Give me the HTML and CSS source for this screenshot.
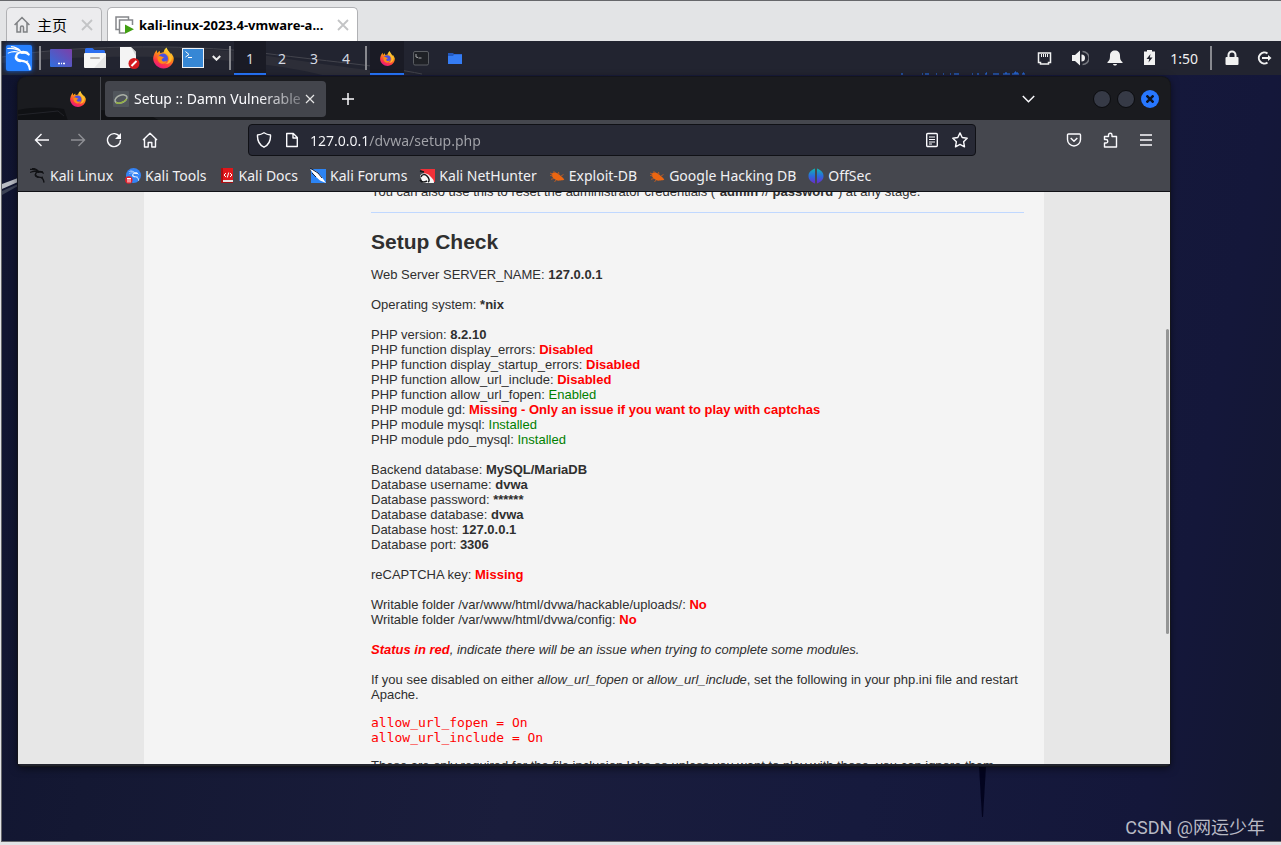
FILE: index.html
```html
<!DOCTYPE html>
<html lang="en">
<head>
  <meta charset="UTF-8" />
  <title>Setup :: Damn Vulnerable Web Application</title>
  <link rel="stylesheet" href="styles.css">
</head>
<body>
  <svg class="defs" aria-hidden="true">
    <defs>
      <linearGradient id="fire" x1="0.8" y1="0" x2="0.3" y2="1">
        <stop offset="0" stop-color="#fff44f" />
        <stop offset="0.4" stop-color="#ff980e" />
        <stop offset="0.75" stop-color="#ff3647" />
        <stop offset="1" stop-color="#e31587" />
      </linearGradient>
      <linearGradient id="purple" x1="0" y1="1" x2="1" y2="0">
        <stop offset="0" stop-color="#2f6fdd" />
        <stop offset="1" stop-color="#7d3fa8" />
      </linearGradient>
      <linearGradient id="offsec" x1="0" y1="0" x2="0" y2="1">
        <stop offset="0" stop-color="#12b5b0" />
        <stop offset="0.5" stop-color="#2a6cdd" />
        <stop offset="1" stop-color="#6a2bc9" />
      </linearGradient>
    </defs>
    <symbol id="firefox" viewBox="0 0 24 24">
      <path fill="url(#fire)" d="M22.6 9.5c-.6-1.8-1.700-3-2.700-3.600.5.9.8 1.800.9 2.500C19.600 5.500 17.300 4.200 15.900 1c-.1-.3-.2-.6-.1-1-2.500 1.400-3.500 4-3.600 5.400-1.300.1-2.500.5-3.500 1.100-.8-.6-1-1.600-.7-2.800-1.300.6-2.300 1.600-3 2.500-.6-.7-.5-2.900-.5-3.400C2.700 4.300 1.300 7.200 1 8.500.3 10.300.1 12 .2 13.200.8 19.300 5.900 24 12 24c6.600 0 11.700-5.200 11.700-11.500 0-1-.4-2.200-1.100-3z" />
      <circle cx="11.500" cy="12.500" r="5.600" fill="#4b51e0" />
      <path fill="#ff8a16" d="M5.200 10.500c1.500-1 3.300-.9 4.600-.1.700.5 1.800.6 2.700.8-.2 1-1.600 1.300-2.300 1.900-.5.500-.2 1.600.5 2.300 1.400 1.300 3.700.7 5.100-.5-.5 2.500-2.400 3.700-4.500 3.700-3.800 0-6.500-3.100-6.100-8.100z" />
      <path fill="#ffbd30" d="M13.300 5.600c2.600.8 5.200 3.500 5.100 7.200 0 3-2 5.400-4.600 6.100 5.300.2 8-3.700 7.700-7.700-.3-3.300-4.300-4.600-5.500-8.200-1 .6-2.200 1.300-2.700 2.600z" />
    </symbol>
    <symbol id="dragon" viewBox="0 0 24 24">
      <path fill="none" stroke="currentColor" stroke-linecap="round" d="M1.500 3.200C6 2.800 11 4 14.500 6.500M2 7.500c4-2 8.500-1.500 12 0M5 1.500c3 .5 6 1.500 8 3.500" />
      <path fill="none" stroke="currentColor" stroke-width="2" stroke-linecap="round" stroke-linejoin="round" d="M21 8.800c-1.500-1.800-4-2.800-6.500-2.300-3.500.3-5.500 2.500-5 5 .6 3 4.500 2.800 7.500 3.600 3 .9 4.500 3.500 5 7.200" />
      <path fill="currentColor" d="M14 5.500l4.500.7 3 3.300-4-1.500-3.500.3zM9 9c-.5 4 2 5.500 6 6l-1.500 1C9 15.500 6.500 12 9 9z" />
      <path fill="none" stroke="currentColor" d="M16 6.500l4.500.3M17.500 15.500l3-.8" />
    </symbol>
    <symbol id="bug" viewBox="0 0 16 16">
      <path fill="#ec6611" d="M3.500 5C5 4.200 8 4.500 10 6.500c1.500 1.600 4 2.600 5.300 5.200-1.800.8-3.500.5-5 .9C7.500 13.200 4.500 10.500 3 8.500 2.300 7.300 2.500 5.700 3.500 5z" />
      <path fill="none" stroke="#b45a26" d="M1 7.500l3 .5M5 10.500l-3 .8M7 12l-1.500 2M6.500 5L4.500 3M10 6.500L9.500 4M12 8l2.500-1.500M1 5l2.500 1" />
    </symbol>
  </svg>

  <nav class="vm-tabs">
    <div class="vm-tab">
      <svg width="16" height="17" viewBox="0 0 16 17" fill="none" stroke="#7f8184" stroke-width="1.500"><path d="M.6 9L8 1.500 15.400 9M3 7v9h3.500v-4.500a1.500 1.500 0 0 1 3 0V16H13V7" /></svg>
      <span>主页</span>
      <button type="button" aria-label="Close home tab"><svg width="12" height="12" viewBox="0 0 12 12" stroke="#c3c4c6" stroke-width="1.800"><path d="M1 1l10 10M11 1L1 11" /></svg></button>
    </div>
    <div class="vm-tab current">
      <svg width="20" height="18" viewBox="0 0 20 18"><path d="M4 13.500H1V1h12.500v3" fill="none" stroke="#85878a" stroke-width="1.500" /><path d="M17.500 9V4H4.500v13H10" fill="none" stroke="#85878a" stroke-width="1.500" /><path d="M10 8.500l9 4.700-9 4.600z" fill="#42a012" /></svg>
      <span>kali-linux-2023.4-vmware-a...</span>
      <button type="button" aria-label="Close virtual machine tab"><svg width="12" height="12" viewBox="0 0 12 12" stroke="#c3c4c6" stroke-width="1.800"><path d="M1 1l10 10M11 1L1 11" /></svg></button>
    </div>
  </nav>

  <main class="desktop">
    <!-- wallpaper details that show around the window -->
    <svg class="wallpaper" aria-hidden="true">
      <path d="M0 143l16-6v4L0 148z" fill="#b9bcc4" />
      <path d="M0 150l16-7v2L0 154z" fill="#3d4356" />
      <path d="M977 725h7l-3 51h-1z" fill="#03041f" />
    </svg>

    <header class="panel">
      <svg class="panel-art" aria-hidden="true">
        <path d="M0 16C60 5 180 2 260 14s110 16 150 20h-90C250 16 120 10 0 22z" fill="#2d2e38" />
        <path d="M0 16C60 5 180 2 260 12s120 13 160 21" fill="none" stroke="#43444d" />
        <path d="M899 33h2M920 33h1M923 33h4M934 33h1M941 33h1M948 33h1M952 33h5M970 33h1M975 33h2M983 33h2M991 33h6M1001 33h7M1010 33h7M1020 33h3" stroke="#2777ff" />
        <path d="M984 32h1M1003 32h2M1012 32h4M1013 31h1M1021 32h1" stroke="#2777ff" />
      </svg>
      <button type="button" class="cell" aria-label="Applications"><span class="kali"><svg width="26" height="26"><use href="#dragon" /></svg></span></button>
      <i class="sep"></i>
      <button type="button" class="cell" aria-label="Show desktop"><svg width="22" height="18"><rect width="22" height="18" rx="1" fill="url(#purple)" /><path d="M8 14.500h2M11 14.500h1M13 14.500h2" stroke="#fff" stroke-width="1.500" /></svg></button>
      <button type="button" class="cell" aria-label="Files"><svg width="22" height="20"><path d="M1 1.500Q1 0 2.500 0h6l2 2h9Q21 2 21 3.500V8H1z" fill="#2d6ff0" /><rect y="5" width="22" height="15" rx="1" fill="#f6f6f6" /><path d="M22 7v13H10z" fill="#e6e6e6" /><path d="M7 10h8" stroke="#b5b0ae" stroke-width="2" stroke-linecap="round" /></svg></button>
      <button type="button" class="cell" aria-label="Text editor"><svg width="21" height="22"><path d="M1 0h11l5 5v16H1z" fill="#f4f4f4" /><path d="M12 0l5 5v4z" fill="#cfcfcf" /><circle cx="15" cy="16.500" r="5.500" fill="#d51a1f" /><path d="M12.500 19l5-5" stroke="#fff" stroke-width="2" /></svg></button>
      <button type="button" class="cell" aria-label="Firefox"><svg width="21" height="22"><use href="#firefox" /></svg></button>
      <button type="button" class="cell narrow" aria-label="Terminal"><svg width="22" height="20"><rect x=".5" y=".5" width="21" height="19" fill="#3687d5" stroke="#f0f2f5" /><path d="M3.500 3.500l3.500 3-3.500 2.500M6 9.500h4" fill="none" stroke="#fff" /></svg></button>
      <button type="button" class="cell drop" aria-label="More terminals"><svg width="9" height="6" fill="none" stroke="#eee" stroke-width="2"><path d="M.8 1l3.700 3.700L8.200 1" /></svg></button>
      <i class="sep"></i>
      <button type="button" class="space active">1</button>
      <button type="button" class="space">2</button>
      <button type="button" class="space">3</button>
      <button type="button" class="space">4</button>
      <i class="sep"></i>
      <button type="button" class="cell active" aria-label="Firefox window"><svg width="15" height="15"><use href="#firefox" /></svg></button>
      <button type="button" class="cell" aria-label="Terminal window"><svg width="16" height="15"><rect x=".5" y=".5" width="15" height="13.500" rx="1.500" fill="#1f2126" stroke="#5a5d62" /><path d="M3 3v3l2 .5M5.500 7h3" fill="none" stroke="#a8aaac" /></svg></button>
      <button type="button" class="cell" aria-label="File manager window"><svg width="14" height="11"><path d="M0 0h5l1 1h8v10H0z" fill="#2459bd" /><path d="M0 3h5l1-1.500h8V11H0z" fill="#357cf3" /></svg></button>

      <div class="tray">
        <button type="button" class="cell wide" aria-label="Network"><svg width="15" height="13"><path d="M1.500 1h12v9.500h-2V12h-8v-1.500h-2z" fill="none" stroke="#f1f1f1" stroke-width="1.500" /><path d="M4.500 2v3M6.500 2v3M8.500 2v3M10.500 2v3" stroke="#f1f1f1" /></svg></button>
        <button type="button" class="cell wide" aria-label="Volume"><svg width="18" height="16"><path d="M1 5h3l5-4.500v15L4 11H1z" fill="#f1f1f1" /><path d="M10.500 4.500a3.500 3.500 0 0 1 0 7z" fill="#f1f1f1" /><path d="M11.500 1.500a6.500 6.500 0 0 1 0 13" fill="none" stroke="#75777e" stroke-width="1.500" /></svg></button>
        <button type="button" class="cell wide" aria-label="Notifications"><svg width="16" height="16" fill="#f1f1f1"><path d="M8 .5c3 0 5 2 5 5 0 4 .7 5 2.500 6.500v1H.5v-1C2.300 10.500 3 9.500 3 5.500c0-3 2-5 5-5z" /><path d="M6 14h4c-.5 2-3.500 2-4 0z" /></svg></button>
        <button type="button" class="cell wide" aria-label="Battery"><svg width="11" height="16"><path d="M3 0h5v1.500h3V15H0V1.500h3z" fill="#f1f1f1" /><path d="M6.500 4L2.500 9h2.700l-.7 3.500 4-5H5.800z" fill="#22242f" /></svg></button>
        <time>1:50</time>
        <i class="sep"></i>
        <button type="button" class="cell" aria-label="Lock"><svg width="14" height="16"><path d="M3.500 8V5a3.500 3.500 0 0 1 7 0v3" fill="none" stroke="#f1f1f1" stroke-width="2" /><rect x=".5" y="7" width="13" height="8" rx="1" fill="#f1f1f1" /></svg></button>
        <button type="button" class="cell" aria-label="Log out"><svg width="15" height="14" fill="none" stroke="#f1f1f1" stroke-width="2"><path d="M10.500 2.500A5.500 5.500 0 1 0 10.500 11.500M5 7h8" /><path d="M11 4l3.500 3L11 10z" fill="#f1f1f1" stroke="none" /></svg></button>
      </div>
    </header>

    <section class="window">
      <header class="titlebar">
        <svg class="titlebar-art" aria-hidden="true"><path d="M0 33c16-3 30-3 46-1l4 12H0zM82 33l46 3 14 8H82z" fill="#101114" /><path d="M0 38l40-4 6 5" fill="none" stroke="#232429" /></svg>
        <div class="pinned"><svg width="16" height="16"><use href="#firefox" /></svg></div>
        <div class="tab">
          <svg width="16" height="16"><rect width="16" height="16" rx="1" fill="#51565c" /><ellipse cx="8" cy="8" rx="6.300" ry="3.700" transform="rotate(-22 8 8)" fill="none" stroke="#aab0a6" stroke-width="1.500" /><path d="M3 11.500c3 1.800 9-.6 10.500-3.500" fill="none" stroke="#93b23f" stroke-width="1.500" /></svg>
          <span>Setup :: Damn Vulnerable</span>
          <button type="button" aria-label="Close tab"><svg width="10" height="10" stroke="#e6e6e6" stroke-width="1.200"><path d="M1 1l8 8M9 1L1 9" /></svg></button>
        </div>
        <button type="button" class="new-tab" aria-label="New tab"><svg width="12" height="12" stroke="#fbfbfe" stroke-width="1.500"><path d="M6 0v12M0 6h12" /></svg></button>
        <div class="controls">
          <button type="button" class="list" aria-label="List all tabs"><svg width="13" height="8" fill="none" stroke="#fbfbfe" stroke-width="1.500"><path d="M.8 1l5.700 5.700L12.200 1" /></svg></button>
          <button type="button" class="dot" aria-label="Minimize"></button>
          <button type="button" class="dot" aria-label="Maximize"></button>
          <button type="button" class="dot close" aria-label="Close"><svg width="8" height="8" stroke="#0c1320" stroke-width="2.500"><path d="M.5.5l7 7M7.500.5l-7 7" /></svg></button>
        </div>
      </header>

      <div class="toolbar">
        <button type="button" aria-label="Back"><svg width="16" height="16"><path d="M15 8H1.500M7.500 2l-6 6 6 6" /></svg></button>
        <button type="button" class="off" aria-label="Forward"><svg width="16" height="16"><path d="M1 8h13.500M8.500 2l6 6-6 6" /></svg></button>
        <button type="button" aria-label="Reload"><svg width="16" height="16"><path d="M13.700 5A6.500 6.500 0 1 0 14.500 8" /><path d="M15 1v6H9z" fill="#fbfbfe" stroke="none" /></svg></button>
        <button type="button" aria-label="Home"><svg width="16" height="16"><path d="M1 8l7-6.800L15 8M2.500 7v8h3.700v-4.500h3.600V15h3.700V7" stroke-linejoin="round" /></svg></button>
        <form class="address" action="#">
          <svg width="16" height="16"><path d="M8 .8c2 1.400 4 2 6.500 2.200C14.800 8.500 13 12.800 8 15.200 3 12.800 1.200 8.500 1.500 3 4 2.800 6 2.200 8 .8z" stroke-linejoin="round" /></svg>
          <svg width="16" height="16"><path d="M2.700 1.500h6.600l4 4v9H2.700zM9 1.500V6h4.300" stroke-linejoin="round" /></svg>
          <input type="text" aria-label="Address" value="127.0.0.1/dvwa/setup.php">
          <button type="button" aria-label="Reader view"><svg width="16" height="16"><rect x="2.700" y="1.500" width="10.600" height="13" rx="1" /><path d="M5 5h6M5 7.500h6M5 10h6M5 12h3" stroke-width="1" /></svg></button>
          <button type="button" aria-label="Bookmark"><svg width="16" height="16"><path d="M8 .9l2.200 4.600 5 .7-3.600 3.500.9 5.100L8 12.400l-4.500 2.400.9-5.100L.8 6.200l5-.7z" stroke-linejoin="round" /></svg></button>
        </form>
        <button type="button" aria-label="Pocket"><svg width="16" height="16"><path d="M2.500 2h11q1 0 1 1v4.500a6.500 6.500 0 0 1-13 0V3q0-1 1-1zM4.700 6L8 9.300 11.300 6" stroke-linejoin="round" /></svg></button>
        <button type="button" aria-label="Extensions"><svg width="16" height="16"><path d="M2.500 15v-4H4a1.700 1.700 0 0 0 0-3.500H2.500V4.500h4V3A1.700 1.700 0 0 1 10 3v1.500h4.500V15z" stroke-linejoin="round" /></svg></button>
        <button type="button" aria-label="Menu"><svg width="16" height="16"><path d="M2 3h12M2 8h12M2 13h12" /></svg></button>
      </div>

      <nav class="bookmarks">
        <a href="#"><svg width="16" height="16" viewBox="1 1 22 22" color="#111215" stroke-width="2"><use href="#dragon" /></svg>Kali Linux</a>
        <a href="#"><svg width="16" height="16" color="#fff"><circle cx="8.500" cy="7.500" r="7.500" fill="#3483f5" /><use href="#dragon" x="3" y="2" width="12" height="11" /><circle cx="3.800" cy="12" r="3.700" fill="#e3202c" /><path d="M2 10.500h4M3 10.500v4M5 10.500v4" stroke="#fff" /></svg>Kali Tools</a>
        <a href="#"><svg width="16" height="16"><path d="M2 0h12v12H2z" fill="#e0171b" /><path d="M2 12h12v3H3q-1 0-1-1z" fill="#e9e4e4" /><path d="M2 0h2v14H2zM2 14h12v1H2z" fill="#a80f13" /><path d="M7 5L5 7l2 2M11 5l2 2-2 2M9.700 4.500l-1.400 5" fill="none" stroke="#fff" /></svg>Kali Docs</a>
        <a href="#"><svg width="16" height="16"><path d="M1 1h15v14H1z" fill="#2c84f4" /><path d="M0 1l6 2 5 5 5 7-6-2.500L5 8z" fill="#fff" /><path d="M0 0l8 5 4 5M2 5l4 4" fill="none" stroke="#17223a" /></svg>Kali Forums</a>
        <a href="#"><svg width="16" height="16"><path d="M1 1h15v13h-2L4 4z" fill="#f03038" /><path d="M1 8c2-4 7-3 10 0s4 4 4 7H4z" fill="#f5f5f5" /><path d="M1 3l4 1M2 9c1-3 4-3 6-1s3 5 1 6M1 12c2 3 5 2 7 1" fill="none" stroke="#16171a" stroke-width="1.500" /></svg>Kali NetHunter</a>
        <a href="#"><svg width="16" height="16"><use href="#bug" /></svg>Exploit-DB</a>
        <a href="#"><svg width="16" height="16"><use href="#bug" /></svg>Google Hacking DB</a>
        <a href="#"><svg width="16" height="16"><path d="M7 .5v15C3.500 14 .5 12 .5 8S3.500 2 7 .5zM9 .5v15c3.500-1.500 6.500-3.500 6.500-7.500S12.500 2 9 .5z" fill="url(#offsec)" /></svg>OffSec</a>
      </nav>

      <div class="viewport">
        <article class="page">
          <p>You can also use this to reset the administrator credentials ("<b>admin</b> // <b>password</b>") at any stage.</p>
          <hr>
          <h1>Setup Check</h1>

          <p>Web Server SERVER_NAME: <b>127.0.0.1</b></p>
          <p>Operating system: <b>*nix</b></p>
          <p>
            PHP version: <b>8.2.10</b><br>
            PHP function display_errors: <b class="failure">Disabled</b><br>
            PHP function display_startup_errors: <b class="failure">Disabled</b><br>
            PHP function allow_url_include: <b class="failure">Disabled</b><br>
            PHP function allow_url_fopen: <span class="success">Enabled</span><br>
            PHP module gd: <b class="failure">Missing - Only an issue if you want to play with captchas</b><br>
            PHP module mysql: <span class="success">Installed</span><br>
            PHP module pdo_mysql: <span class="success">Installed</span>
          </p>
          <p>
            Backend database: <b>MySQL/MariaDB</b><br>
            Database username: <b>dvwa</b><br>
            Database password: <b>******</b><br>
            Database database: <b>dvwa</b><br>
            Database host: <b>127.0.0.1</b><br>
            Database port: <b>3306</b>
          </p>
          <p>reCAPTCHA key: <b class="failure">Missing</b></p>
          <p>
            Writable folder /var/www/html/dvwa/hackable/uploads/: <b class="failure">No</b><br>
            Writable folder /var/www/html/dvwa/config: <b class="failure">No</b>
          </p>
          <p><i><b class="failure">Status in red</b>, indicate there will be an issue when trying to complete some modules.</i></p>
          <p>If you see disabled on either <i>allow_url_fopen</i> or <i>allow_url_include</i>, set the following in your php.ini file and restart Apache.</p>
          <pre>allow_url_fopen = On
allow_url_include = On</pre>
          <p>These are only required for the file inclusion labs so unless you want to play with those, you can ignore them.</p>
        </article>
        <i class="thumb"></i>
      </div>
    </section>

    <div class="watermark">CSDN @网运少年</div>
  </main>
</body>
</html>
```
FILE: styles.css
```css
* {
  box-sizing: border-box;
}
body {
  margin: 0;
  height: 100vh;
  padding: 0 0 3px 1px;
  display: flex;
  flex-direction: column;
  overflow: hidden;
  border-top: 1px solid #66676b;
  background: #e3e4e6;
  font-family: "Noto Sans", "Noto Sans CJK SC", sans-serif;
}
button {
  display: flex;
  align-items: center;
  justify-content: center;
  flex: none;
  padding: 0;
  border: 0;
  background: none;
  font-family: inherit;
  color: inherit;
}
svg {
  flex: none;
}
.defs {
  position: absolute;
  width: 0;
  height: 0;
}

/* virtual machine tabs */
.vm-tabs {
  display: flex;
  gap: 5px;
  height: 40px;
  padding: 6px 0 0 5px;
}
.vm-tab {
  display: flex;
  align-items: center;
  gap: 7px;
  padding: 0 8px 0 7px;
  border: 1px solid #b0b1b4;
  border-bottom: 0;
  border-radius: 5px 5px 0 0;
  background: #ececee;
  font-size: 15px;
  line-height: 20px;
  color: #000;
}
.vm-tab button {
  margin-left: 7px;
}
.vm-tab.current {
  gap: 4px;
  background: #fff;
  font-size: 13px;
  font-weight: bold;
}
.vm-tab.current button {
  margin-left: 10px;
}

/* desktop */
.desktop {
  position: relative;
  flex: 1;
  min-height: 0;
  display: flex;
  flex-direction: column;
  border-left: 1px solid #66676b;
  border-bottom: 1px solid #66676b;
  background: linear-gradient(100deg, #101430 0%, #141833 15%, #1a1d3c 45%, #161a3d 70%, #14173a 90%, #131730 100%);
}
.wallpaper,
.panel-art,
.titlebar-art {
  position: absolute;
  left: 0;
  top: 0;
  width: 100%;
  height: 100%;
}

/* top panel */
.panel {
  position: relative;
  display: flex;
  height: 34px;
  background: #222430;
  color: #f1f1f1;
}
.panel > button,
.panel > .sep,
.tray {
  position: relative;
}
.cell {
  width: 34px;
}
.cell.narrow {
  width: 26px;
}
.cell.drop {
  width: 20px;
}
.cell.wide {
  width: 35px;
}
.sep {
  flex: none;
  width: 2px;
  height: 24px;
  margin: 5px 3px;
  background: #88898f;
}
.space {
  width: 32px;
  font-size: 14px;
  color: #d4d9e2;
}
.panel .active {
  background: #1a1b25;
  border-bottom: 2px solid #2777ff;
  border-top: 2px solid transparent;
}
.kali {
  display: flex;
  width: 26px;
  height: 26px;
  border-radius: 2px;
  background: #2680ff;
  box-shadow: 0 0 5px #1763e0;
  color: #fff;
}
.tray {
  display: flex;
  align-items: center;
  margin-left: auto;
}
.tray .cell {
  height: 100%;
}
.tray .sep ~ .cell {
  width: 33px;
}
.tray time {
  padding: 0 9px 0 3px;
  font-size: 14px;
}

/* browser window */
.window {
  position: relative;
  flex: 1;
  min-height: 0;
  display: flex;
  flex-direction: column;
  margin: 2px 111px 75px 16px;
  border-radius: 8px 8px 4px 4px;
  border-bottom: 2px solid #22242e;
  background: #1a1b1f;
  box-shadow: 0 0 0 1px #14151b, 0 2px 8px rgba(0,0,0,0.6);
  color: #fbfbfe;
}
.titlebar {
  position: relative;
  display: flex;
  align-items: center;
  height: 43px;
}
.pinned,
.tab,
.new-tab,
.controls {
  position: relative;
}
.pinned {
  display: flex;
  align-items: center;
  justify-content: flex-end;
  width: 83px;
  height: 43px;
  padding-right: 14px;
  border-right: 1px solid #45474d;
}
.tab {
  display: flex;
  align-items: center;
  gap: 5px;
  width: 221px;
  height: 36px;
  margin-left: 4px;
  padding: 0 11px 0 8px;
  border-radius: 4px;
  background: #43454c;
  font-size: 14px;
}
.tab span {
  flex: 1;
  overflow: hidden;
  white-space: nowrap;
  -webkit-mask-image: linear-gradient(90deg, #000 75%, rgba(0,0,0,0.3));
}
.new-tab {
  width: 36px;
  height: 36px;
  margin-left: 4px;
}
.controls {
  display: flex;
  align-items: center;
  gap: 6px;
  margin-left: auto;
  padding-right: 11px;
}
.list {
  width: 36px;
  height: 36px;
  margin-right: 41px;
}
.dot {
  width: 18px;
  height: 18px;
  border: 1px solid #0b0c0f;
  border-radius: 50%;
  background: #363a46;
}
.dot.close {
  border: 0;
  background: #2777ff;
}

.toolbar {
  display: flex;
  align-items: center;
  height: 40px;
  padding: 0 6px;
  background: #45474e;
}
.toolbar > button {
  width: 36px;
  height: 36px;
}
.toolbar svg {
  fill: none;
  stroke: #fbfbfe;
  stroke-width: 1.4;
}
.toolbar .off {
  opacity: 0.4;
}
.address {
  flex: 1;
  display: flex;
  align-items: center;
  gap: 12px;
  height: 32px;
  margin: 0 80px;
  padding: 0 7px;
  border: 1px solid #101116;
  border-radius: 4px;
  background: #272935;
}
.address input {
  flex: 1;
  min-width: 0;
  margin-left: -2px;
  padding: 0;
  border: 0;
  outline: none;
  /* host is bright, path is dimmed */
  background: linear-gradient(90deg, #fbfbfe 57px, #a3a4aa 57px);
  -webkit-background-clip: text;
  color: transparent;
  font-family: inherit;
  font-size: 14px;
}

.bookmarks {
  display: flex;
  align-items: center;
  gap: 12px;
  height: 32px;
  padding: 0 12px;
  border-bottom: 1px solid #101116;
  background: #45474e;
  font-size: 14px;
  white-space: nowrap;
}
.bookmarks a {
  display: flex;
  align-items: center;
  gap: 4px;
  color: #f1f1f3;
  text-decoration: none;
}

/* web page */
.viewport {
  position: relative;
  flex: 1;
  min-height: 0;
  overflow: hidden;
  background: #e7e7e7;
}
.page {
  max-width: 900px;
  margin: -8px auto 0;
  padding: 0 20px 0 227px;
  background: #f4f4f4;
  color: #2f2f2f;
  font-family: "Liberation Sans", Arial, sans-serif;
  font-size: 13px;
  line-height: 15px;
}
.page p {
  margin: 0 0 15px;
}
.page hr {
  margin: -2px 0 17px;
  border: 0;
  border-top: 1px solid #c0d8ff;
}
.page h1 {
  margin: 0 0 13px;
  font-size: 21px;
  line-height: 24px;
}
.page pre {
  margin: -2px 0 13px;
  font-family: "DejaVu Sans Mono", monospace;
  font-size: 13px;
  color: #f00;
}
.failure {
  color: #f00;
}
.success {
  color: #008000;
}
.thumb {
  position: absolute;
  top: 137px;
  right: 1px;
  width: 3px;
  height: 305px;
  border-radius: 2px;
  background: #959696;
}

.watermark {
  position: absolute;
  right: 16px;
  bottom: 2px;
  font-family: Roboto, "Noto Sans CJK SC", sans-serif;
  font-size: 18px;
  color: #b9bac4;
}
```
